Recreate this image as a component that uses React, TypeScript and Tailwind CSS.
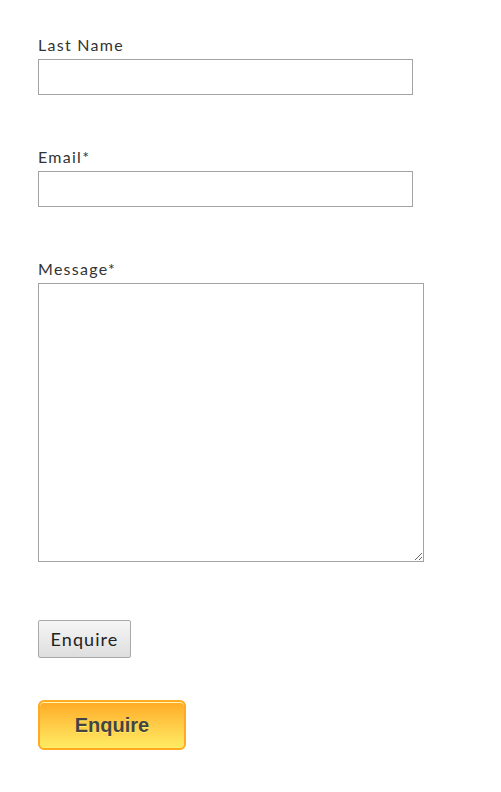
export default function App() {
  return (
    <main className="w-full min-h-screen bg-white pl-[38px] pt-[33px] font-['Lato',sans-serif] text-[#333]">
      <form className="flex flex-col" onSubmit={e => e.preventDefault()}>
        {/* Last name */}
        <label className="block text-[16px] leading-[24px] tracking-[0.08em] mb-[2px]">Last Name</label>
        <input type="text" className="block w-[375px] h-[36px] border border-[#a3a3a3] bg-white outline-none" />

        {/* Email */}
        <label className="block text-[16px] leading-[24px] tracking-[0.08em] mt-[50px] mb-[2px]">Email*</label>
        <input type="email" className="block w-[375px] h-[36px] border border-[#a3a3a3] bg-white outline-none" />

        {/* Message */}
        <label className="block text-[16px] leading-[24px] tracking-[0.08em] mt-[50px] mb-[2px]">Message*</label>
        <textarea className="block w-[386px] h-[279px] border border-[#a3a3a3] bg-white outline-none resize" />

        {/* Plain button */}
        <div className="mt-[58px]">
          <button
            type="submit"
            className="h-[38px] w-[93px] border border-[#a9a9a9] rounded-[2px] bg-gradient-to-b from-[#f6f6f6] to-[#dedede] text-[18px] tracking-[0.06em] text-[#222]"
          >
            Enquire
          </button>
        </div>

        {/* Yellow button */}
        <div className="mt-[42px]">
          <button
            type="button"
            className="h-[50px] w-[148px] rounded-[6px] border-2 border-[#ffaa22] bg-gradient-to-b from-[#ffab23] to-[#ffec64] font-['Liberation_Sans',Arial,sans-serif] text-[20px] leading-[24px] font-bold text-[#444] [text-shadow:0_1px_0_#ffee66] shadow-[inset_0_1px_0_0_#fff6af]"
          >
            Enquire
          </button>
        </div>
      </form>
    </main>
  )
}
